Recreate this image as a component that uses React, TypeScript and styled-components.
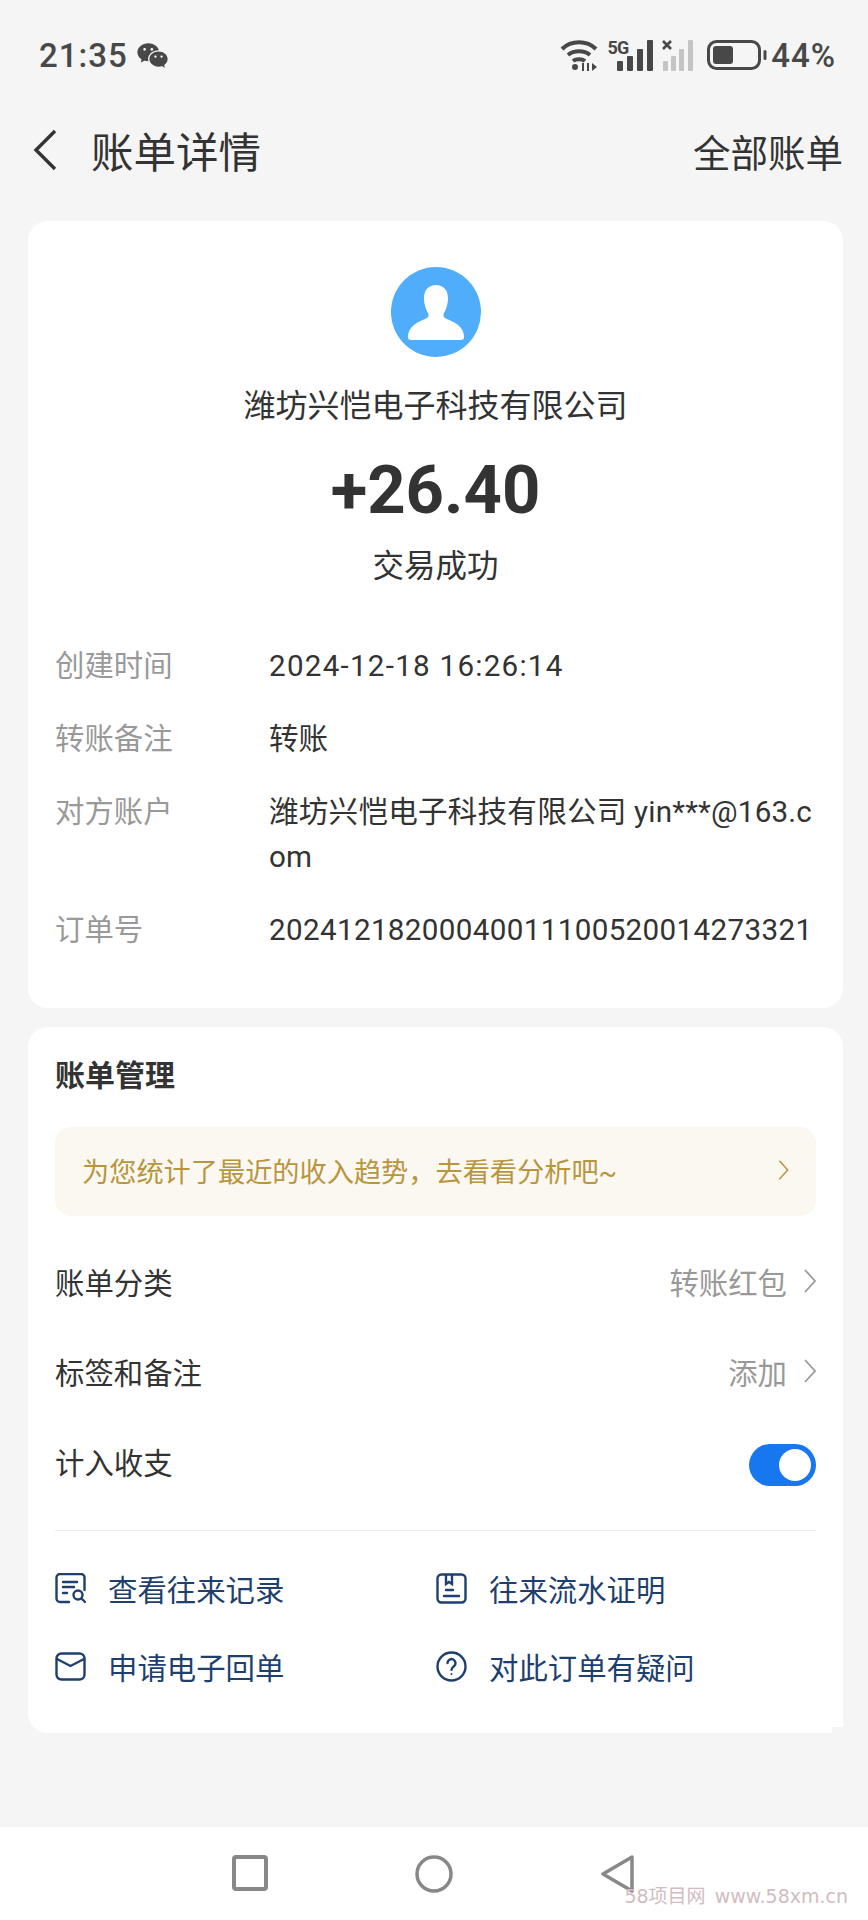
import { Fragment } from "react";
import styled, { createGlobalStyle } from "styled-components";
import { RiWechatFill } from "react-icons/ri";

const GlobalStyle = createGlobalStyle`
  html, body {
    margin: 0;
    padding: 0;
    background: #f5f5f5;
  }
  * {
    box-sizing: border-box;
  }
  body {
    font-family: Roboto, "Noto Sans CJK SC", sans-serif;
    color: #333;
  }
`;

const Page = styled.div`
  position: relative;
  width: 868px;
  height: 1920px;
  display: flex;
  flex-direction: column;
  overflow: hidden;
`;

const StatusBar = styled.div`
  height: 110px;
  padding: 0 32px 0 39px;
  display: flex;
  align-items: center;
  justify-content: space-between;
  color: #484848;
`;

const StatusLeft = styled.div`
  display: flex;
  align-items: center;
  gap: 8px;
`;

const Clock = styled.span`
  font-size: 33px;
  font-weight: 500;
  letter-spacing: 1px;
`;

const StatusRight = styled.div`
  display: flex;
  align-items: center;
  gap: 9px;
`;

const Signal = styled.div`
  display: flex;
  align-items: flex-start;
`;

const FiveG = styled.span`
  margin-right: -11px;
  font-size: 18px;
  font-weight: 700;
  line-height: 18px;
  letter-spacing: -1px;
`;

const Percent = styled.span`
  font-size: 33px;
  font-weight: 500;
  letter-spacing: 1px;
  margin-left: -5px;
`;

const TopBar = styled.div`
  height: 80px;
  margin-bottom: 31px;
  padding: 0 25px 0 33px;
  display: flex;
  align-items: center;
`;

const Title = styled.h1`
  margin: -2px 0 0 34px;
  font-size: 42.5px;
  font-weight: 400;
  flex: 1;
`;

const AllBills = styled.span`
  font-size: 37.5px;
`;

const Main = styled.div`
  padding: 0 25px 0 28px;
  display: flex;
  flex-direction: column;
  gap: 19px;
`;

const Card = styled.section`
  background: #fff;
  border-radius: 20px;
  padding: 0 27px;
`;

const SummaryCard = styled(Card)`
  height: 787px;
  padding-top: 46px;
`;

const Avatar = styled.div`
  width: 90px;
  height: 90px;
  margin: 0 auto;
  border-radius: 50%;
  background: #4fadfc;
  display: flex;
  align-items: center;
  justify-content: center;
`;

const Company = styled.div`
  margin-top: 27px;
  font-size: 32px;
  line-height: 44px;
  text-align: center;
`;

const Amount = styled.div`
  margin-top: 22px;
  font-size: 67px;
  font-weight: 700;
  line-height: 80px;
  text-align: center;
`;

const TradeStatus = styled.div`
  margin-top: 15px;
  font-size: 31.5px;
  line-height: 44px;
  text-align: center;
`;

const Details = styled.dl`
  margin: 55px 0 0;
  display: grid;
  grid-template-columns: 214px 1fr;
  row-gap: 28px;
  line-height: 45px;
`;

const DetailLabel = styled.dt`
  color: #999;
  font-size: 29.4px;
`;

const DetailValue = styled.dd<{ $spacing: number }>`
  margin: 0;
  color: #333;
  word-break: break-all;
  letter-spacing: ${(p) => p.$spacing}px;
  font-size: 29.6px;
`;

const ManageCard = styled(Card)`
  position: relative;
  height: 706px;
  padding-top: 27px;
  border-bottom-right-radius: 0;

  /* the stepped corner at the bottom right of this card */
  &::after {
    content: "";
    position: absolute;
    right: 0;
    bottom: 0;
    width: 11px;
    height: 6px;
    background: #f5f5f5;
  }
`;

const SectionTitle = styled.h2`
  margin: 0;
  font-size: 30px;
  font-weight: 700;
  line-height: 44px;
`;

const Notice = styled.div`
  margin-top: 29px;
  height: 89px;
  padding: 0 27px 3px 27px;
  border-radius: 16px;
  background: #fbf8f2;
  color: #b8963f;
  font-size: 27.2px;
  display: flex;
  align-items: center;
  justify-content: space-between;
`;

const Rows = styled.div`
  margin-top: 22px;
`;

const Row = styled.div`
  height: 90px;
  padding-bottom: 4px;
  display: flex;
  align-items: center;
  justify-content: space-between;
  font-size: 29.4px;
`;

const RowValue = styled.div`
  display: flex;
  align-items: center;
  gap: 17px;
  color: #999;
`;

const Toggle = styled.div`
  width: 67px;
  height: 42px;
  margin-top: 7px;
  padding: 5px;
  border-radius: 21px;
  background: #1677ee;
  display: flex;
  justify-content: flex-end;
`;

const Knob = styled.div`
  width: 32px;
  height: 32px;
  border-radius: 50%;
  background: #fff;
`;

const Divider = styled.hr`
  margin: 22px 0 0;
  border: 0;
  border-top: 1px solid #ececec;
`;

const Links = styled.div`
  margin-top: 37px;
  display: grid;
  grid-template-columns: 381px 1fr;
  row-gap: 38px;
`;

const LinkItem = styled.div`
  height: 40px;
  display: flex;
  align-items: center;
  gap: 22px;
  font-size: 29.4px;
  color: #1f3f6e;
`;

const BottomNav = styled.nav`
  margin-top: auto;
  height: 93px;
  background: #fff;
  display: flex;
  justify-content: center;
  align-items: flex-start;
  padding-top: 28px;
`;

const NavSlot = styled.div`
  width: 184px;
  display: flex;
  justify-content: center;
`;

const Watermark = styled.div`
  position: absolute;
  right: 20px;
  bottom: 14px;
  font-family: "DejaVu Sans", "Noto Sans CJK SC", sans-serif;
  font-size: 19px;
  line-height: 20px;
  color: #d2bcc1;
  display: flex;
  gap: 9px;
`;

const BackIcon = () => (
  <svg width="24" height="42" viewBox="0 0 24 42" fill="none" stroke="#333" strokeWidth="3.4">
    <path d="M22 2 3 21l19 19" />
  </svg>
);

const Chevron = ({ color, w, h }: { color: string; w: number; h: number }) => (
  <svg width={w} height={h} viewBox="0 0 12 24" fill="none" stroke={color} strokeWidth="1.8">
    <path d="M1 1l10 11L1 23" />
  </svg>
);

const WifiIcon = () => (
  <svg width="40" height="32" viewBox="0 0 38 32" fill="none" stroke="#484848" strokeWidth="4">
    <path d="M2 10C11 1 27 1 36 10" />
    <path d="M8 16c6-5 16-5 22 0" />
    <path d="M13 22c3-2.5 9-2.5 12 0" />
    <circle cx="15" cy="28" r="3" fill="#484848" stroke="none" />
    <path d="M23 24v8M28 24v8" strokeWidth="2" />
    <path d="M32 24l5 4-5 4z" fill="#484848" stroke="none" />
  </svg>
);

const SignalBars = () => (
  <svg width="36" height="32" viewBox="0 0 36 32" fill="#484848">
    <rect x="0" y="22" width="6" height="10" rx="1" />
    <rect x="10" y="17" width="6" height="15" rx="1" />
    <rect x="20" y="10" width="6" height="22" rx="1" />
    <rect x="30" y="1" width="6" height="31" rx="1" />
  </svg>
);

const EmptySignal = () => (
  <svg width="36" height="32" viewBox="0 0 36 32" fill="#c4c4c4">
    <path d="M1 2l8 8M9 2l-8 8" stroke="#484848" strokeWidth="2.6" />
    <rect x="1" y="22" width="5" height="10" rx="1" />
    <rect x="9" y="17" width="5" height="15" rx="1" />
    <rect x="17" y="10" width="5" height="22" rx="1" />
    <rect x="26" y="1" width="5" height="31" rx="1" />
  </svg>
);

const BatteryIcon = () => (
  <svg width="60" height="30" viewBox="0 0 60 30" fill="none">
    <rect x="1.5" y="1.5" width="51" height="27" rx="8" stroke="#484848" strokeWidth="3" />
    <rect x="6" y="6" width="20" height="18" rx="3" fill="#484848" />
    <rect x="56.5" y="10" width="3" height="10" rx="1.5" fill="#484848" />
  </svg>
);

const PersonIcon = () => (
  <svg width="56" height="55" viewBox="0 0 56 55">
    <path
      d="M28 0c7 0 12 5 12 13 0 6-2 12-4 15-1.5 3 0 5 3 6 9 4 17 8 17 18 0 2-1 3-3 3H3c-2 0-3-1-3-3 0-10 8-14 17-18 3-1 4.5-3 3-6-2-3-4-9-4-15C16 5 21 0 28 0Z"
      fill="#fff"
    />
  </svg>
);

const RecordIcon = () => (
  <svg width="31" height="31" viewBox="0 0 31 31" fill="none" stroke="#1f3f6e" strokeWidth="2.4" strokeLinecap="round">
    <path d="M14 29H5a3.5 3.5 0 0 1-3.5-3.5v-21A3.5 3.5 0 0 1 5 1h21a3.5 3.5 0 0 1 3.5 3.5V17" />
    <path d="M8 9h14M8 14h11M8 20h4" />
    <circle cx="23" cy="22" r="4.5" />
    <path d="M26.5 25.5 30 29" />
  </svg>
);

const ProofIcon = () => (
  <svg width="31" height="31" viewBox="0 0 31 31" fill="none" stroke="#1f3f6e" strokeWidth="2.4" strokeLinecap="round">
    <rect x="1.5" y="1.5" width="28" height="28" rx="4" />
    <path d="M10 2v9l3-2 3 2V2" />
    <path d="M10 17h7M8 23h15" />
  </svg>
);

const MailIcon = () => (
  <svg width="31" height="29" viewBox="0 0 31 29" fill="none" stroke="#1f3f6e" strokeWidth="2.4" strokeLinecap="round">
    <rect x="1.5" y="1.5" width="28" height="26" rx="5" />
    <path d="M2 7l13.5 7L29 7" />
  </svg>
);

const HelpIcon = () => (
  <svg width="31" height="31" viewBox="0 0 31 31" fill="none" stroke="#1f3f6e" strokeWidth="2.4" strokeLinecap="round">
    <circle cx="15.5" cy="15.5" r="14" />
    <path d="M11.5 12a4 4 0 1 1 6.5 3.2c-1.5 1.1-2.5 1.8-2.5 3.6" />
    <circle cx="15.5" cy="23" r="1" fill="#1f3f6e" stroke="none" />
  </svg>
);

const App = () => {
  const details = [
    { label: "创建时间", spacing: 1.25, value: "2024-12-18 16:26:14" },
    { label: "转账备注", spacing: 0, value: "转账" },
    { label: "对方账户", spacing: 0.2, value: "潍坊兴恺电子科技有限公司 yin***@163.com" },
    { label: "订单号", spacing: 0.35, value: "20241218200040011100520014273321" },
  ];

  return (
    <Page>
      <GlobalStyle />
      <StatusBar>
        <StatusLeft>
          <Clock>21:35</Clock>
          <RiWechatFill size={33} color="#484848" />
        </StatusLeft>
        <StatusRight>
          <WifiIcon />
          <Signal>
            <FiveG>5G</FiveG>
            <SignalBars />
          </Signal>
          <EmptySignal />
          <BatteryIcon />
          <Percent>44%</Percent>
        </StatusRight>
      </StatusBar>

      <TopBar>
        <BackIcon />
        <Title>账单详情</Title>
        <AllBills>全部账单</AllBills>
      </TopBar>

      <Main>
        <SummaryCard>
          <Avatar>
            <PersonIcon />
          </Avatar>
          <Company>潍坊兴恺电子科技有限公司</Company>
          <Amount>+26.40</Amount>
          <TradeStatus>交易成功</TradeStatus>
          <Details>
            {details.map((d) => (
              <Fragment key={d.label}>
                <DetailLabel>{d.label}</DetailLabel>
                <DetailValue $spacing={d.spacing}>{d.value}</DetailValue>
              </Fragment>
            ))}
          </Details>
        </SummaryCard>

        <ManageCard>
          <SectionTitle>账单管理</SectionTitle>
          <Notice>
            为您统计了最近的收入趋势，去看看分析吧~
            <Chevron color="#b8963f" w={11} h={20} />
          </Notice>
          <Rows>
            <Row>
              账单分类
              <RowValue>
                转账红包
                <Chevron color="#999" w={12} h={24} />
              </RowValue>
            </Row>
            <Row>
              标签和备注
              <RowValue>
                添加
                <Chevron color="#999" w={12} h={24} />
              </RowValue>
            </Row>
            <Row>
              计入收支
              <Toggle>
                <Knob />
              </Toggle>
            </Row>
          </Rows>
          <Divider />
          <Links>
            <LinkItem>
              <RecordIcon />
              查看往来记录
            </LinkItem>
            <LinkItem>
              <ProofIcon />
              往来流水证明
            </LinkItem>
            <LinkItem>
              <MailIcon />
              申请电子回单
            </LinkItem>
            <LinkItem>
              <HelpIcon />
              对此订单有疑问
            </LinkItem>
          </Links>
        </ManageCard>
      </Main>

      <BottomNav>
        <NavSlot>
          <svg width="36" height="36" viewBox="0 0 36 36" fill="none" stroke="#888" strokeWidth="4">
            <rect x="2" y="2" width="32" height="32" rx="2" />
          </svg>
        </NavSlot>
        <NavSlot>
          <svg width="38" height="38" viewBox="0 0 38 38" fill="none" stroke="#888" strokeWidth="3.5">
            <circle cx="19" cy="19" r="17" />
          </svg>
        </NavSlot>
        <NavSlot>
          <svg width="34" height="38" viewBox="0 0 34 38" fill="none" stroke="#888" strokeWidth="3.5" strokeLinejoin="round">
            <path d="M31 2 2 19l29 17Z" />
          </svg>
        </NavSlot>
      </BottomNav>
      <Watermark>
        <span>58项目网</span>
        <span>www.58xm.cn</span>
      </Watermark>
    </Page>
  );
};

export default App;
